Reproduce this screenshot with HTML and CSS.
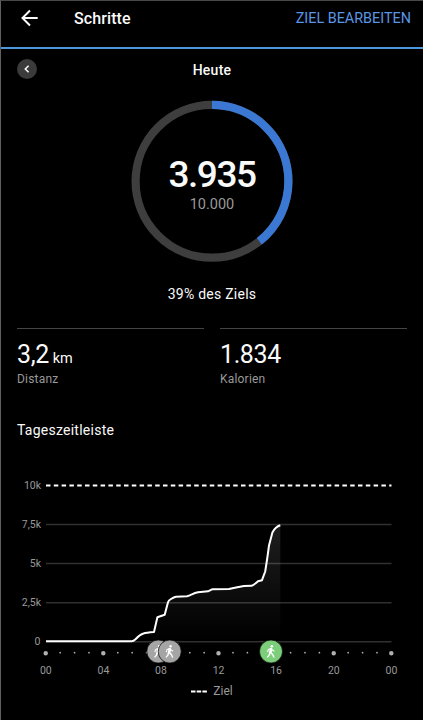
FILE: index.html
```
<!DOCTYPE html>
<html lang="de">
<head>
<meta charset="utf-8">
<title>Schritte</title>
<link rel="stylesheet" href="styles.css">
</head>
<body>
<div class="screen">
 <header class="bar">
  <svg class="back" width="18" height="18" viewBox="0 0 18 18"><path d="M16.700 9H2M9 1.500L1.500 9L9 16.500"/></svg>
  <h1>Schritte</h1>
  <a class="edit">ZIEL BEARBEITEN</a>
 </header>

 <div class="day">
  <span class="prev"><svg width="20" height="20" viewBox="0 0 20 20"><path d="M11.6 6.8L8.3 10L11.6 13.2"/></svg></span>
  <h2>Heute</h2>
  <span></span>
 </div>

 <div class="ring">
  <svg width="162" height="162" viewBox="0 0 162 162">
   <circle class="track" cx="81" cy="81.3" r="76.4"/>
   <circle class="done" cx="81" cy="81.3" r="76.4" pathLength="100" stroke-dasharray="39.35 100" transform="rotate(-90 81 81.3)"/>
  </svg>
  <div class="count">
   <b>3.935</b>
   <span>10.000</span>
  </div>
 </div>
 <p class="percent">39% des Ziels</p>

 <div class="stats">
  <div class="stat">
   <div class="value">3,2 <small>km</small></div>
   <div class="label">Distanz</div>
  </div>
  <div class="stat">
   <div class="value">1.834</div>
   <div class="label">Kalorien</div>
  </div>
 </div>

 <h3>Tageszeitleiste</h3>
 <svg class="chart" width="422" height="212" viewBox="1 470 422 212">
  <defs>
   <linearGradient id="fill" gradientUnits="userSpaceOnUse" x1="0" y1="525" x2="0" y2="641">
    <stop offset="0" stop-color="#fff" stop-opacity=".12"/>
    <stop offset="1" stop-color="#fff" stop-opacity="0"/>
   </linearGradient>
   <g id="walk">
    <circle r="11.5"/>
    <circle class="man" cx=".9" cy="-5.3" r="1.25"/>
    <path class="man" d="M-.9 -3.6L.8 -3.8L1.7 -1.9L3.7 -.7L3.3 .2L1.1 -.9L.8 1L2.5 3L3.6 5.9L2.4 6.3L1.3 3.7L-.5 2L-1.2 4L-3.4 6.3L-4.2 5.5L-2.4 3.3L-1.4 -1.9L-2.4 -1.3L-2.9 .7L-3.9 .5L-3.3 -2.1Z"/>
   </g>
  </defs>

  <path class="grid" d="M46 524.5H391.5M46 563.5H391.5M46 602.7H391.5M46 641.8H391.5"/>
  <path class="goal" d="M46 485.5H391.5"/>
  <path class="area" d="M132 641L139 636L143 633.5L147 632.6L154 632L157.4 617.3L164.7 614.7L168 602L171 599L175 597L187 596L195 592.7L208 591.3L212 589L229 589L244 586L251.5 585.8L258 581L262 580L265 571L269 545L273 531L276 528L280.3 525.5V641Z"/>
  <path class="line" d="M46 641.3H131.5Q133.5 641.2 135.5 639.3Q140 634.5 143.5 633.5Q146 632.6 154 632L157.4 617.3Q161 616 164.7 614.7L168 602.3Q168.5 600.5 171 599Q174 597.2 176 596.8L187 596.2Q190 595.7 192 594.3Q195 592.7 198 592.2L208 591.3Q210 590.2 212 589.3L229 589L236 587.5L244 586L251.5 585.8Q254.5 584.5 258 581.2L262 580.2L265.2 571.5L267.3 558L269 545.5L272.4 532.5Q275.5 526.8 280.3 525.3"/>

  <g class="ylabels">
   <text x="41" y="488.7">10k</text>
   <text x="41" y="528">7,5k</text>
   <text x="41" y="567">5k</text>
   <text x="41" y="606">2,5k</text>
   <text x="40.5" y="645.3">0</text>
  </g>

  <!-- one dot per hour, a larger one every four -->
  <path class="hours" d="M60.2 652.7H380"/>
  <path class="hours4" d="M45.7 653.2H392"/>

  <g class="xlabels">
   <text x="45.8" y="673.7">00</text>
   <text x="103.4" y="673.7">04</text>
   <text x="160.9" y="673.7">08</text>
   <text x="218.6" y="673.7">12</text>
   <text x="276.1" y="673.7">16</text>
   <text x="333.8" y="673.7">20</text>
   <text x="391.4" y="673.7">00</text>
  </g>

  <use class="walk" href="#walk" x="158.3" y="651.5"/>
  <use class="walk" href="#walk" x="169.7" y="651.5"/>
  <use class="walk active" href="#walk" x="271" y="651.5"/>
 </svg>
 <div class="legend"><svg width="16" height="3"><path d="M0 1.5H16"/></svg>Ziel</div>
</div>
</body>
</html>
```
FILE: styles.css
```
* {box-sizing:border-box;}
body {margin:0; background:#000; color:#fafafa; font-family:Roboto,sans-serif;}
h1,h2,h3,p {margin:0; font-weight:400;}
svg {display:block; fill:none;}

.screen {height:720px; border-top:1px solid #484848; border-left:1px solid #606060; overflow:hidden;}

.bar {display:flex; align-items:center; height:48px; padding:0 12px 12px 20px; border-bottom:2px solid #4b98dd;}
.back path {stroke:#fafafa; stroke-width:2;}
h1 {margin-left:35px; font-size:16px; font-weight:500; letter-spacing:.1px;}
.edit {margin-left:auto; color:#5b96e6; font-size:14.4px;}

.day {display:grid; grid-template-columns:20px 1fr 20px; align-items:center; height:40px; padding:0 16px;}
.prev {border-radius:50%; background:#3b3b3b;}
.prev path {stroke:#fafafa; stroke-width:1.5;}
h2 {text-align:center; font-size:14px; font-weight:500; letter-spacing:.25px; padding-top:1px;}

.ring {display:grid; justify-content:center; margin-top:11px;}
.ring svg, .count {grid-area:1/1;}
.ring circle {stroke-width:8.2;}
.track {stroke:#3e3e3e;}
.done {stroke:#3b78d3;}
.count {display:flex; flex-direction:column; align-items:center; padding-top:54px;}
.count b {font-size:37px; line-height:42px; font-weight:500; letter-spacing:-1.5px;}
.count span {font-size:14.5px; line-height:17px; color:#999;}
.percent {margin-top:24px; text-align:center; font-size:14px; line-height:17px; letter-spacing:.25px;}

.stats {display:grid; grid-template-columns:187px 187px; gap:16px; margin:25px 0 0 16px;}
.stat {height:94px; padding-top:11px; border-top:1px solid #454545;}
.value {height:29px; font-size:25px; line-height:29px; letter-spacing:-.4px;}
.value small {font-size:14.5px; margin-left:-2px; letter-spacing:0;}
.label {margin-top:3px; font-size:12px; line-height:15px; letter-spacing:.2px; color:#999;}

h3 {margin-left:16px; font-size:14px; line-height:17px; letter-spacing:.25px;}
.chart {margin-top:31px;}
.grid {stroke:#303030; stroke-width:1.5;}
.goal {stroke:#fff; stroke-width:2; stroke-dasharray:4.5 3.3;}
.area {fill:url(#fill);}
.line {stroke:#fff; stroke-width:2; stroke-linejoin:round;}
.hours,.hours4 {stroke:#b0b0b0; stroke-linecap:round;}
.hours {stroke-width:1.7; stroke-dasharray:0 14.4;}
.hours4 {stroke-width:4.5; stroke-dasharray:0 57.6;}
.chart text {font-size:10.5px; fill:#999;}
.ylabels {text-anchor:end;}
.xlabels {text-anchor:middle;}
.walk {fill:#a5a5a5; stroke:#000; stroke-width:.7;}
.active {fill:#7dce7b;}
.man {fill:#fff; stroke:none;}

.legend {display:flex; align-items:center; justify-content:center; gap:6px; height:18px; font-size:12px; color:#999;}
.legend path {stroke:#fff; stroke-width:2; stroke-dasharray:4.5 1.2;}
```
